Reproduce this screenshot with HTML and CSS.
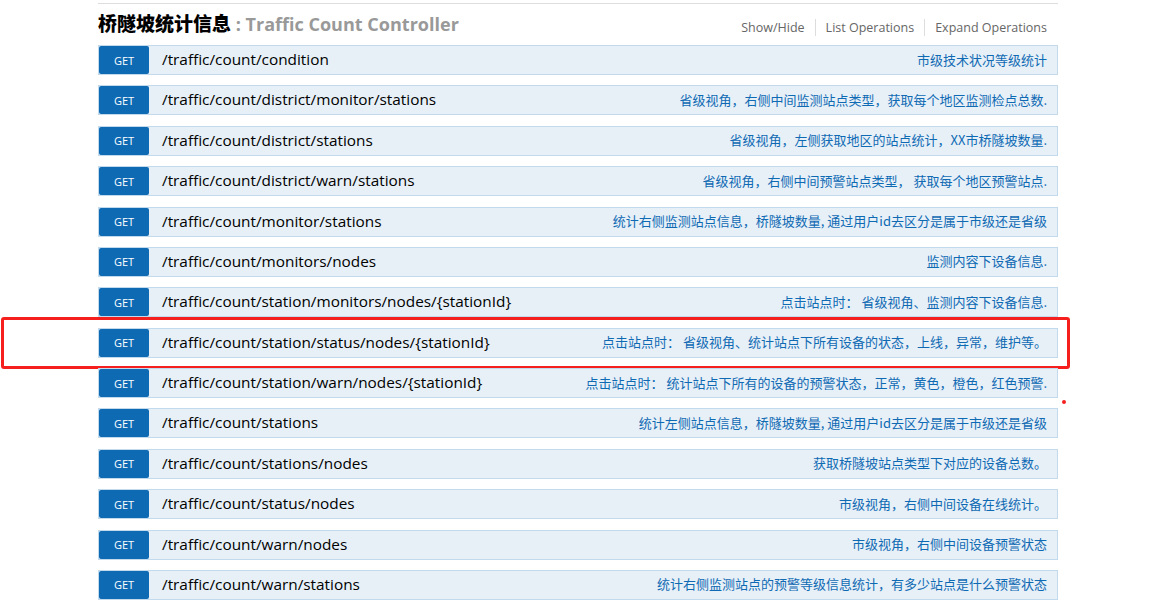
FILE: index.html
```html
<!DOCTYPE html>
<html>
<head>
<meta charset="utf-8">
<link rel="stylesheet" href="styles.css">
</head>
<body>
<div class="resource">
  <div class="heading">
    <h2 class="title"><span class="cn">桥隧坡统计信息</span><span class="en"> : Traffic Count Controller</span></h2>
    <ul class="options">
      <li>Show/Hide</li>
      <li>List Operations</li>
      <li>Expand Operations</li>
    </ul>
  </div>
  <ul class="ops">
    <li class="op"><span class="verb">GET</span><span class="path">/traffic/count/condition</span><span class="desc">市级技术状况等级统计</span></li>
    <li class="op"><span class="verb">GET</span><span class="path">/traffic/count/district/monitor/stations</span><span class="desc">省级视角，右侧中间监测站点类型，获取每个地区监测检点总数.</span></li>
    <li class="op"><span class="verb">GET</span><span class="path">/traffic/count/district/stations</span><span class="desc">省级视角，左侧获取地区的站点统计，XX市桥隧坡数量.</span></li>
    <li class="op"><span class="verb">GET</span><span class="path">/traffic/count/district/warn/stations</span><span class="desc">省级视角，右侧中间预警站点类型， 获取每个地区预警站点.</span></li>
    <li class="op"><span class="verb">GET</span><span class="path">/traffic/count/monitor/stations</span><span class="desc">统计右侧监测站点信息，桥隧坡数量, 通过用户id去区分是属于市级还是省级</span></li>
    <li class="op"><span class="verb">GET</span><span class="path">/traffic/count/monitors/nodes</span><span class="desc">监测内容下设备信息.</span></li>
    <li class="op"><span class="verb">GET</span><span class="path">/traffic/count/station/monitors/nodes/{stationId}</span><span class="desc">点击站点时： 省级视角、监测内容下设备信息.</span></li>
    <li class="op marked"><span class="verb">GET</span><span class="path">/traffic/count/station/status/nodes/{stationId}</span><span class="desc">点击站点时： 省级视角、统计站点下所有设备的状态，上线，异常，维护等。</span><span class="redbox"></span></li>
    <li class="op"><span class="verb">GET</span><span class="path">/traffic/count/station/warn/nodes/{stationId}</span><span class="desc">点击站点时： 统计站点下所有的设备的预警状态，正常，黄色，橙色，红色预警.</span><span class="reddot"></span></li>
    <li class="op"><span class="verb">GET</span><span class="path">/traffic/count/stations</span><span class="desc">统计左侧站点信息，桥隧坡数量, 通过用户id去区分是属于市级还是省级</span></li>
    <li class="op"><span class="verb">GET</span><span class="path">/traffic/count/stations/nodes</span><span class="desc">获取桥隧坡站点类型下对应的设备总数。</span></li>
    <li class="op"><span class="verb">GET</span><span class="path">/traffic/count/status/nodes</span><span class="desc">市级视角，右侧中间设备在线统计。</span></li>
    <li class="op"><span class="verb">GET</span><span class="path">/traffic/count/warn/nodes</span><span class="desc">市级视角，右侧中间设备预警状态</span></li>
    <li class="op"><span class="verb">GET</span><span class="path">/traffic/count/warn/stations</span><span class="desc">统计右侧监测站点的预警等级信息统计，有多少站点是什么预警状态</span></li>
  </ul>
</div>
</body>
</html>
```

FILE: styles.css
```css
html, body {
  margin: 0;
  padding: 0;
  background: #fff;
}
body {
  font-family: "Open Sans", "Noto Sans CJK SC", sans-serif;
  color: #000;
}
.resource {
  width: 960px;
  margin-left: 98px;
  padding-top: 3px;
}
.heading {
  border-top: 1px solid #ddd;
  height: 41px;
  display: flex;
  align-items: center;
  justify-content: space-between;
}
.title {
  margin: 0;
  font-weight: bold;
  line-height: 1;
  position: relative;
  top: -3px;
}
.title .cn {
  color: #000;
  font-size: 19px;
  font-weight: 900;
  font-family: "Noto Sans CJK SC", sans-serif;
}
.title .en {
  color: #999;
  font-size: 18.05px;
}
.options {
  list-style: none;
  margin: 0;
  padding: 0 11px 0 0;
  display: flex;
  font-size: 12.5px;
  color: #666;
  position: relative;
  top: 3px;
}
.options li {
  padding: 0 10px;
  border-left: 1px solid #ddd;
  line-height: 17px;
}
.options li:first-child {
  border-left: none;
}
.options li:last-child {
  padding-right: 0;
}
.ops {
  list-style: none;
  margin: 0;
  padding: 0;
}
.op {
  position: relative;
  height: 28px;
  margin-bottom: 10.38px;
  background: #e7f0f7;
  border: 1px solid #c3d9ec;
  display: flex;
  align-items: center;
}
.verb {
  width: 50px;
  height: 28px;
  background: #0f6ab4;
  color: #fff;
  font-size: 11px;
  display: flex;
  align-items: center;
  justify-content: center;
  border-radius: 2px;
  flex: none;
}
.path {
  padding-left: 13px;
  font-size: 15.35px;
  color: #000;
  flex: none;
  position: relative;
  top: -1px;
}
.desc {
  margin-left: auto;
  padding-right: 10px;
  font-size: 13px;
  color: #0f6ab4;
  font-family: "Noto Sans CJK SC", sans-serif;
  white-space: nowrap;
  position: relative;
  top: -1px;
}
.redbox {
  position: absolute;
  left: -98px;
  top: -12px;
  width: 1063px;
  height: 46px;
  border: 3px solid #f5201e;
  border-radius: 3px;
  pointer-events: none;
}
.reddot {
  position: absolute;
  left: 963px;
  top: 31px;
  width: 4px;
  height: 4px;
  border-radius: 50%;
  background: #f5201e;
}
```
